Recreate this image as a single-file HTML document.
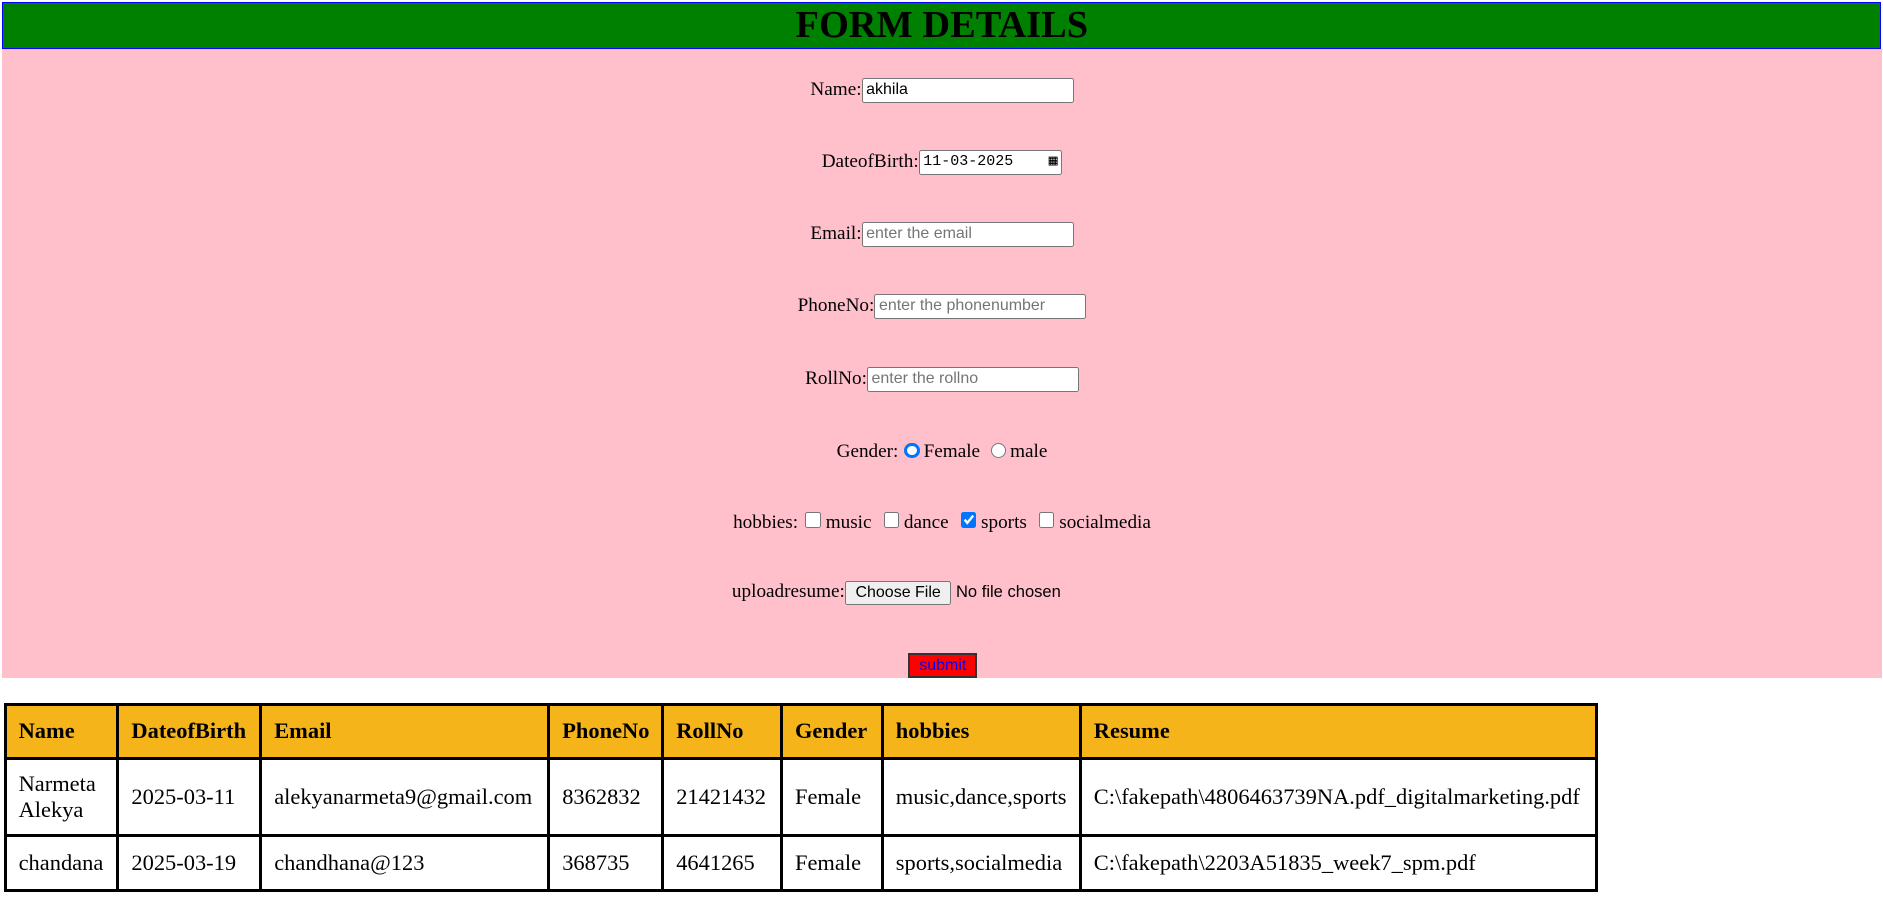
<!DOCTYPE html>
<html><head><meta charset="utf-8"><style>
html,body{margin:0;padding:0;background:#fff;}
body{zoom:1.2;width:1569px;height:748px;position:relative;overflow:hidden;font-family:"Liberation Serif",serif;font-size:16px;color:#000;}
.hdr{position:absolute;left:2px;top:2px;width:1564px;height:37px;background:#008000;border:1px solid #00f;border-bottom:2px solid #00f;text-align:center;font-weight:bold;font-size:32px;line-height:38px;}
.pink{position:absolute;left:2px;top:41px;width:1566px;height:524px;background:#ffc0cb;}
.row{position:absolute;left:0;width:1566px;text-align:center;height:24px;line-height:24px;white-space:nowrap;}
.in{display:inline-block;vertical-align:middle;height:19px;border:1px solid #767676;border-radius:2px;background:#fff;font-family:"Liberation Sans",sans-serif;font-size:13.33px;text-align:left;line-height:19px;padding:0 3px;box-sizing:content-box;}
.ph{color:#757575;}
.rad{display:inline-block;width:13px;height:13px;border:1px solid #767676;border-radius:50%;background:#fff;vertical-align:-1px;margin:0 3px 0 5px;box-sizing:border-box;}
.rad.on{border:3px solid #0075ff;background:#fff;}
.cb{display:inline-block;width:13px;height:13px;border:1px solid #767676;border-radius:2px;background:#fff;vertical-align:0px;margin:0 4px 0 6px;box-sizing:border-box;position:relative;}
.cb.on{background:#0075ff;border-color:#0075ff;}
.btn{display:inline-block;vertical-align:middle;height:19px;line-height:19px;padding:0 8px;border:1px solid #767676;border-radius:2px;background:#efefef;font-family:"Liberation Sans",sans-serif;font-size:13.33px;}
.sub{position:absolute;left:755px;top:503px;width:54px;height:18px;background:#f00;border:2px solid #333;color:#00f;font-family:"Liberation Sans",sans-serif;font-size:13.33px;text-align:center;line-height:18px;}
table{position:absolute;left:3px;top:586px;border-collapse:collapse;table-layout:fixed;width:1326px;}
td,th{border:2.5px solid #000;padding:0 10px;text-align:left;vertical-align:middle;font-size:18.7px;white-space:normal;}
th{background:#f4b41a;height:42px;}
tr.r1 td{height:62px;}
tr.r2 td{height:43px;}
</style></head><body>
<div class="hdr">FORM DETAILS</div>
<div class="pink">
<div class="row" style="top:22px">Name:<span class="in" style="width:169px">akhila</span></div>
<div class="row" style="top:82px">DateofBirth:<span class="in" style="width:112px;font-family:'Liberation Mono',monospace;font-size:12.5px">11-03-2025 <span style="float:right">&#9638;</span></span></div>
<div class="row" style="top:142px">Email:<span class="in ph" style="width:169px">enter the email</span></div>
<div class="row" style="top:202px">PhoneNo:<span class="in ph" style="width:169px">enter the phonenumber</span></div>
<div class="row" style="top:263px">RollNo:<span class="in ph" style="width:169px">enter the rollno</span></div>
<div class="row" style="top:324px">Gender:<span class="rad on"></span>Female <span class="rad"></span>male</div>
<div class="row" style="top:383px">hobbies:<span class="cb"></span>music <span class="cb"></span>dance <span class="cb on"><svg width="11" height="11" viewBox="0 0 10 10" style="position:absolute;left:0;top:0"><path d="M2 5 L4 7.5 L8.5 2" stroke="#fff" stroke-width="1.8" fill="none"/></svg></span>sports <span class="cb"></span>socialmedia</div>
<div class="row" style="top:441px;padding-right:76px;box-sizing:border-box">uploadresume:<span class="btn">Choose File</span><span style="font-family:'Liberation Sans',sans-serif;font-size:13.8px"> No file chosen</span></div>
<div class="sub">submit</div>
</div>
<table>
<colgroup><col style="width:94px"><col style="width:119px"><col style="width:240px"><col style="width:95px"><col style="width:99px"><col style="width:84px"><col style="width:165px"><col style="width:430px"></colgroup>
<tr><th>Name</th><th>DateofBirth</th><th>Email</th><th>PhoneNo</th><th>RollNo</th><th>Gender</th><th>hobbies</th><th>Resume</th></tr>
<tr class="r1"><td>Narmeta Alekya</td><td>2025-03-11</td><td>alekyanarmeta9@gmail.com</td><td>8362832</td><td>21421432</td><td>Female</td><td>music,dance,sports</td><td>C:\fakepath\4806463739NA.pdf_digitalmarketing.pdf</td></tr>
<tr class="r2"><td>chandana</td><td>2025-03-19</td><td>chandhana@123</td><td>368735</td><td>4641265</td><td>Female</td><td>sports,socialmedia</td><td>C:\fakepath\2203A51835_week7_spm.pdf</td></tr>
</table>
</body></html>
